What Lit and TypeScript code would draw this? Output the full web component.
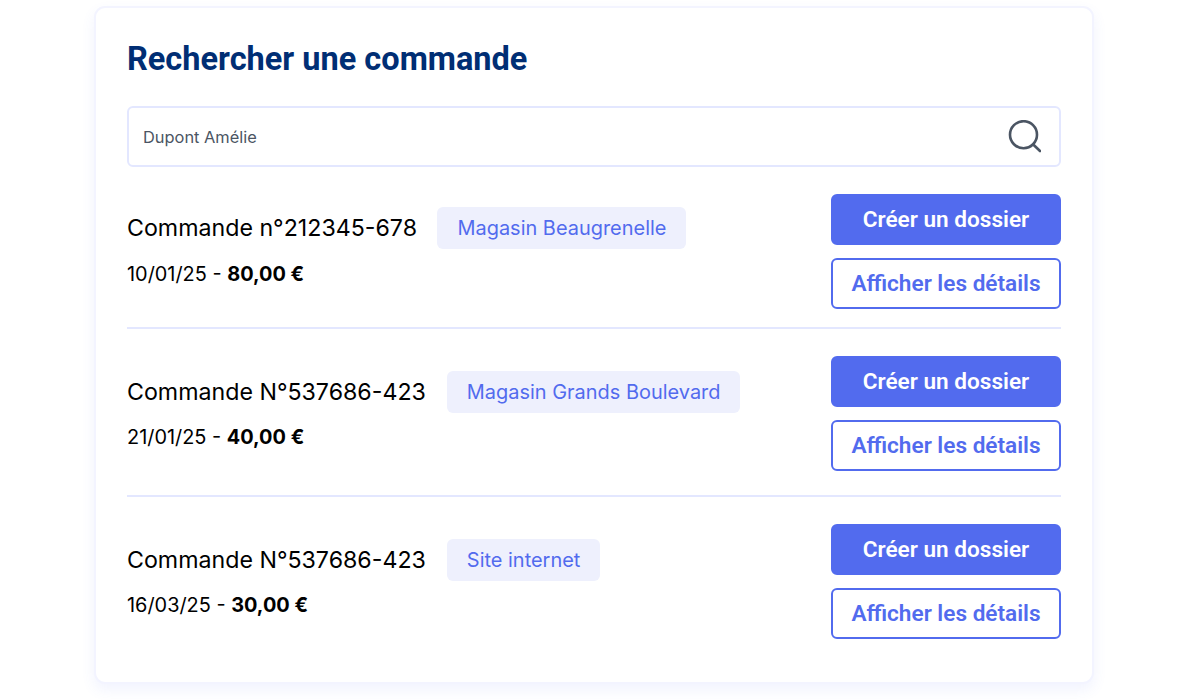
import { LitElement, html, css } from 'lit';
import { customElement } from 'lit/decorators.js';

const orders = [
  { title: 'Commande n°212345-678', shop: 'Magasin Beaugrenelle', date: '10/01/25', total: '80,00 €', first: true },
  { title: 'Commande N°537686-423', shop: 'Magasin Grands Boulevard', date: '21/01/25', total: '40,00 €', first: false },
  { title: 'Commande N°537686-423', shop: 'Site internet', date: '16/03/25', total: '30,00 €', first: false },
];

@customElement('app-root')
export class AppRoot extends LitElement {
  static styles = css`
    :host {
      display: block;
      height: 700px;
      background: #fff;
      font-family: Inter, sans-serif;
      color: #000;
    }

    .card {
      box-sizing: border-box;
      width: 1000px;
      height: 678px;
      margin-left: 94px;
      position: relative;
      top: 6px;
      padding: 31px 31px 0;
      background: #fff;
      border: 2px solid #f3f4ff;
      border-radius: 11px;
      box-shadow: 0 6px 14px rgba(82, 107, 238, 0.08);
    }

    h1 {
      margin: 0;
      height: 40px;
      line-height: 40px;
      font-family: Roboto, sans-serif;
      font-size: 32.5px;
      font-weight: 700;
      color: #002e74;
    }

    .search {
      box-sizing: border-box;
      height: 61px;
      margin-top: 27px;
      padding: 0 18px 0 14px;
      display: flex;
      align-items: center;
      justify-content: space-between;
      border: 2px solid #e3e7ff;
      border-radius: 6px;
      font-size: 16.4px;
      color: #4b5563;
    }

    .search svg {
      display: block;
    }

    .order {
      display: flex;
      justify-content: space-between;
      padding: 27px 0 24px;
      border-bottom: 2px solid #e3e7ff;
    }

    .order.first {
      padding-bottom: 18px;
    }

    .order:last-child {
      border-bottom: 0;
    }

    .info {
      padding-top: 15px;
    }

    .first .info {
      padding-top: 13px;
    }

    .head {
      display: flex;
      align-items: center;
      gap: 21px;
    }

    .first .head {
      gap: 20.5px;
    }

    .name {
      font-size: 23.2px;
      line-height: 42px;
    }

    .badge {
      height: 42px;
      line-height: 42px;
      padding: 0 20px;
      border-radius: 6px;
      background: #eef0fd;
      color: #526bee;
      font-size: 19.95px;
    }

    .meta {
      margin-top: 12px;
      font-size: 19.9px;
      line-height: 24px;
    }

    .first .meta {
      margin-top: 13px;
    }

    .meta b {
      font-weight: 700;
    }

    .actions {
      display: flex;
      flex-direction: column;
      gap: 13px;
    }

    button {
      box-sizing: border-box;
      width: 230px;
      height: 51px;
      padding: 0;
      border: 2px solid #526bee;
      border-radius: 6px;
      background: #526bee;
      color: #fff;
      font-family: Roboto, sans-serif;
      font-size: 22.6px;
      font-weight: 600;
    }

    button.outline {
      background: #fff;
      color: #526bee;
    }
  `;

  render() {
    return html`
      <div class="card">
        <h1>Rechercher une commande</h1>
        <div class="search">
          <span>Dupont Amélie</span>
          <svg width="34" height="34" viewBox="0 0 34 34" fill="none" stroke="#4b5563" stroke-width="2.6" stroke-linecap="round">
            <circle cx="16.5" cy="14.7" r="13.5"></circle>
            <path d="M26.5 24.7 L33 31"></path>
          </svg>
        </div>
        ${orders.map(
          (o) => html`
            <div class="order ${o.first ? 'first' : ''}">
              <div class="info">
                <div class="head">
                  <span class="name">${o.title}</span>
                  <span class="badge">${o.shop}</span>
                </div>
                <div class="meta">${o.date} - <b>${o.total}</b></div>
              </div>
              <div class="actions">
                <button>Créer un dossier</button>
                <button class="outline">Afficher les détails</button>
              </div>
            </div>
          `
        )}
      </div>
    `;
  }
}
